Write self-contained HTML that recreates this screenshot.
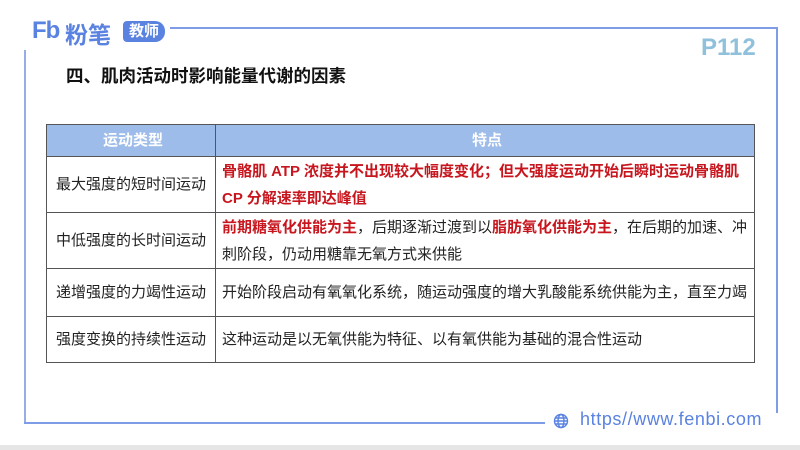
<!DOCTYPE html>
<html><head><meta charset="utf-8"><style>
body{margin:0;width:800px;height:450px;background:#fff;position:relative;overflow:hidden;font-family:"Liberation Sans","Noto Sans CJK SC",sans-serif}
.a{position:absolute}
table{position:absolute;left:46px;top:124px;width:708px;border-collapse:collapse;table-layout:fixed;font-size:15px;color:#222}
td,th{border:1px solid #555;padding:0 2px 0 6px;line-height:27px;white-space:nowrap}
th{background:#9dbce9;color:#fff;font-weight:bold;font-size:15px;height:31px}
td.l{text-align:center;padding:0 2px}
.r{color:#c8161e;font-weight:bold}
</style></head><body>
<div class="a" style="left:0;top:445px;width:800px;height:5px;background:#e6e6e6"></div>
<div class="a" style="left:170px;top:27px;width:608px;height:2px;background:#7f9ce6"></div>
<div class="a" style="left:776px;top:27px;width:2px;height:386px;background:#7f9ce6"></div>
<div class="a" style="left:24px;top:50px;width:2px;height:374px;background:#98ade6"></div>
<div class="a" style="left:24px;top:422px;width:521px;height:2px;background:#7f9ce6"></div>
<div class="a" style="left:32px;top:17px;font-size:24px;font-weight:bold;color:#5a82e0;letter-spacing:-1px">Fb</div>
<div class="a" style="left:65px;top:16px;font-size:23px;font-weight:bold;color:#5a82e0">粉笔</div>
<div class="a" style="left:123px;top:21px;width:42px;height:21px;background:#5a82e0;border-radius:4px 10px 10px 4px;color:#fff;font-size:15px;font-weight:bold;line-height:21px;text-align:center">教师</div>
<div class="a" style="left:701px;top:34px;font-size:24px;font-weight:bold;color:#8fc0dc">P112</div>
<div class="a" style="left:66px;top:63px;font-size:17.5px;font-weight:bold;color:#111">四、肌肉活动时影响能量代谢的因素</div>
<table>
<colgroup><col style="width:169px"><col style="width:539px"></colgroup>
<tr><th>运动类型</th><th>特点</th></tr>
<tr style="height:56px"><td class="l">最大强度的短时间运动</td><td class="r">骨骼肌 ATP 浓度并不出现较大幅度变化；但大强度运动开始后瞬时运动骨骼肌<br>CP 分解速率即达峰值</td></tr>
<tr style="height:56px"><td class="l">中低强度的长时间运动</td><td><span class="r">前期糖氧化供能为主</span>，后期逐渐过渡到以<span class="r">脂肪氧化供能为主</span>，在后期的加速、冲<br>刺阶段，仍动用糖靠无氧方式来供能</td></tr>
<tr style="height:48px"><td class="l">递增强度的力竭性运动</td><td>开始阶段启动有氧氧化系统，随运动强度的增大乳酸能系统供能为主，直至力竭</td></tr>
<tr style="height:46px"><td class="l">强度变换的持续性运动</td><td>这种运动是以无氧供能为特征、以有氧供能为基础的混合性运动</td></tr>
</table>
<svg class="a" style="left:553px;top:413px" width="16" height="16" viewBox="0 0 16 16" fill="none" stroke="#5a82e0" stroke-width="1.4"><circle cx="8" cy="8" r="6.5"/><ellipse cx="8" cy="8" rx="3" ry="6.5"/><path d="M1.5 8h13M2.5 5h11M2.5 11h11"/></svg>
<div class="a" style="left:580px;top:409px;font-size:18px;letter-spacing:0.6px;color:#5a82e0">https//www.fenbi.com</div>
</body></html>
